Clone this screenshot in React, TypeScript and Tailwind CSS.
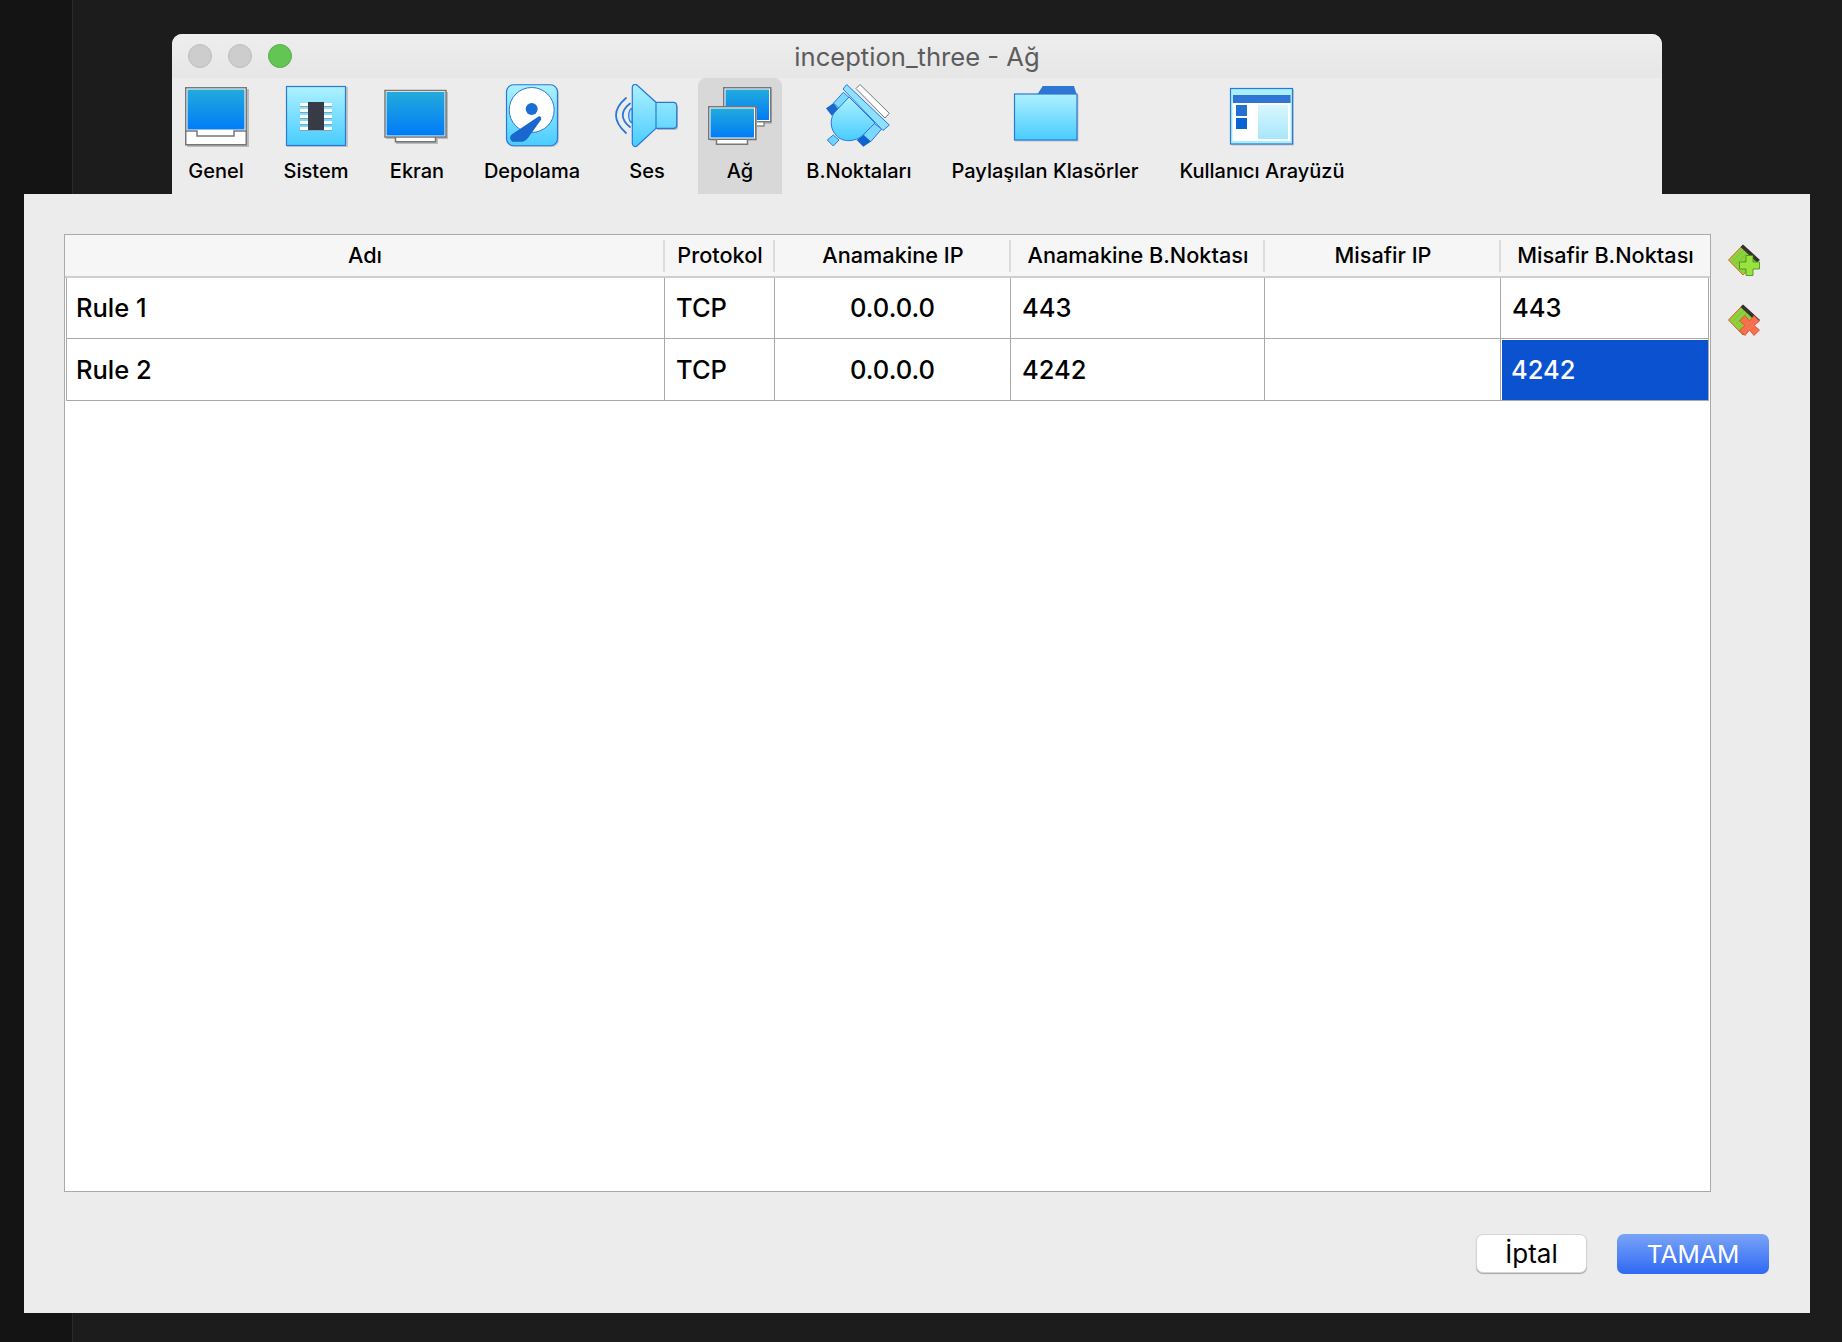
import React from 'react';

const BLUE = '#2a78d8';

// shared gradients for the toolbar icons
const Defs = () => (
  <svg width="0" height="0" className="block h-0 w-0">
    <defs>
      <linearGradient id="scr" x1="0" y1="0" x2="0" y2="1">
        <stop offset="0" stopColor="#22abdc" />
        <stop offset="1" stopColor="#007cf7" />
      </linearGradient>
      <linearGradient id="lite" x1="0" y1="0" x2="0" y2="1">
        <stop offset="0" stopColor="#aef1ff" />
        <stop offset="1" stopColor="#48ccff" />
      </linearGradient>
      <linearGradient id="pane" x1="0" y1="0" x2="0" y2="1">
        <stop offset="0" stopColor="#d8f7ff" />
        <stop offset="1" stopColor="#a8e6fa" />
      </linearGradient>
    </defs>
  </svg>
);

const Icon = ({ children }: { children: React.ReactNode }) => (
  <svg viewBox="0 0 70 66" width="70" height="66" className="block">
    {children}
  </svg>
);

const GenelIcon = () => (
  <Icon>
    <rect x="6" y="5" width="62" height="58" fill="#bbb" />
    <rect x="4.75" y="3.75" width="60.5" height="57" fill="#fff" stroke="#777" strokeWidth="1.5" />
    <rect x="6.5" y="5.5" width="57" height="40" fill="url(#scr)" />
    <path d="M5 47H16V52H53V47H65" fill="none" stroke="#777" strokeWidth="1.5" />
  </Icon>
);

const SistemIcon = () => (
  <Icon>
    <rect x="6" y="3" width="61" height="60" fill="#c4c4c4" />
    <rect x="5.5" y="2.5" width="59" height="59" fill="url(#lite)" stroke={BLUE} strokeWidth="1.2" />
    {[19, 25, 31, 37, 43].map((y) => (
      <g key={y}>
        <rect x="19" y={y} width="32" height="3" fill="#fff" />
        <rect x="19" y={y + 3} width="32" height="1" fill="#7ba7c4" />
      </g>
    ))}
    <rect x="27" y="18" width="16" height="28" fill="#383b45" />
  </Icon>
);

const EkranIcon = () => (
  <Icon>
    <rect x="14" y="50" width="42" height="10" fill="#bbb" />
    <rect x="4" y="8" width="62" height="47" fill="#bbb" />
    <path d="M13.5 53V57.75H53.5V53" fill="#fff" stroke="#777" strokeWidth="1.5" />
    <rect x="3" y="6.5" width="61" height="46.5" fill="#fff" stroke="#777" strokeWidth="1.5" />
    <rect x="4.5" y="8" width="58" height="43.5" fill="url(#scr)" />
  </Icon>
);

const DepolamaIcon = () => (
  <Icon>
    <rect x="10" y="2" width="52" height="61" rx="7" fill="#c8c8c8" />
    <rect x="9.5" y="0.75" width="51" height="61" rx="7" fill="url(#lite)" stroke={BLUE} strokeWidth="1.2" />
    <circle cx="34.7" cy="26" r="22.5" fill="#fff" stroke={BLUE} strokeWidth="1" />
    <circle cx="34.7" cy="25" r="6" fill="#1a6fd4" />
    <path d="M41.5 32.5C43.5 31.8 44.8 33.8 44 35.8L31 54C28.8 57 26.5 57.8 23.5 57.8H17C13.8 57.8 12 54 13.8 51.5C14.5 50.6 15.5 50 16.5 49.2Z" fill="#1a68cd" />
  </Icon>
);

const SesIcon = () => (
  <Icon>
    <path d="M14 14Q-6 31 14 49M18 19.5Q3.5 31 18 43" fill="none" stroke={BLUE} strokeWidth="1.8" strokeLinecap="round" />
    <path d="M20.3 24C15.5 26 15.5 37 20.3 39Z" fill="#9fe3ff" stroke={BLUE} strokeWidth="1.2" />
    <path d="M45 20H62.5C64.5 20 66 21.5 66 23.5V43C66 45 64.5 46 62.5 46H45Z" fill="#b5b5b5" />
    <path d="M20.3 3.5C20.3 0.5 23 -0.5 25.2 1.2L44 18.3H61.3C63.5 18.3 64.7 19.7 64.7 21.7V41C64.7 43 63.5 44.3 61.3 44.3H44L25.2 61.8C23 63.5 20.3 62 20.3 59.3Z" fill="url(#lite)" stroke={BLUE} strokeWidth="1.2" />
    <path d="M44 18.3V44.3" stroke={BLUE} strokeWidth="1.2" />
  </Icon>
);

const AgIcon = () => (
  <Icon>
    <rect x="20" y="5" width="47" height="35" fill="#bbb" />
    <rect x="50" y="36" width="9" height="6" fill="#fff" stroke="#777" strokeWidth="1.2" />
    <rect x="18.75" y="3.75" width="47" height="34" fill="#fff" stroke="#777" strokeWidth="1.5" />
    <rect x="20.5" y="5.5" width="43.5" height="30.5" fill="url(#scr)" />
    <rect x="5" y="24" width="47" height="33" fill="#bbb" />
    <path d="M11.5 53V60.25H42.5V53" fill="#fff" stroke="#777" strokeWidth="1.5" />
    <rect x="3.75" y="22.75" width="47" height="32.5" fill="#fff" stroke="#777" strokeWidth="1.5" />
    <rect x="5.5" y="24.5" width="43.5" height="29" fill="url(#scr)" />
  </Icon>
);

const NoktaIcon = () => (
  <Icon>
    <path d="M36 0.5L65.3 29.3L61 34L32 4.5Z" fill="#fff" stroke="#777" strokeWidth="1" />
    <path d="M9.3 19.3L19.3 8.3L25.3 13.7L15.3 24.3Z" fill="#7bd8ff" stroke={BLUE} strokeWidth="1" />
    <path d="M2 24.3L9.3 19.3L15.3 26L7.7 31.7Z" fill="#1a68cd" />
    <path d="M39.3 51L50 39.3L57.7 45L46.7 57.7Z" fill="#7bd8ff" stroke={BLUE} strokeWidth="1" />
    <path d="M32.7 56L39.3 51L46.7 57.7L39.3 62.7Z" fill="#0f62cf" />
    <path d="M3.3 56L9.3 51L15 56L9.3 62Z" fill="#6fd4ff" stroke={BLUE} strokeWidth="1" />
    <path d="M25 13L51 39L39 51C32 58 18 59 12 51C6 45 6 35 10 29Z" fill="url(#lite)" stroke={BLUE} strokeWidth="1" />
    <path d="M22.7 0.5L65.3 41L59 46.5L19 5Z" fill="#8fe2ff" stroke={BLUE} strokeWidth="1" />
  </Icon>
);

const FolderIcon = () => (
  <Icon>
    <rect x="5" y="11" width="63.5" height="46.5" fill="#c4c4c4" />
    <path d="M27.3 10.5L32.7 2H64L66.7 10.5Z" fill="#2f75d4" />
    <rect x="4.5" y="10" width="62.5" height="46" fill="url(#lite)" stroke={BLUE} strokeWidth="1.2" />
  </Icon>
);

const ArayuzIcon = () => (
  <Icon>
    <rect x="4.5" y="5.5" width="62.5" height="56" fill="#c4c4c4" />
    <rect x="3.5" y="4.5" width="62" height="55.5" fill="#a8efff" stroke={BLUE} strokeWidth="1.2" />
    <rect x="5.5" y="19" width="58" height="38" fill="#fff" />
    <rect x="6" y="11" width="57.5" height="8" fill="#2f75d4" />
    <rect x="9" y="21" width="11" height="11" fill="#2170d2" />
    <rect x="9" y="34" width="11" height="11" fill="#0a63d5" />
    <rect x="31" y="21" width="30" height="34" fill="url(#pane)" />
  </Icon>
);

const TABS = [
  { label: 'Genel', w: 'w-[88px]', icon: <GenelIcon /> },
  { label: 'Sistem', w: 'w-[112px]', icon: <SistemIcon /> },
  { label: 'Ekran', w: 'w-[90px]', icon: <EkranIcon /> },
  { label: 'Depolama', w: 'w-[140px]', icon: <DepolamaIcon /> },
  { label: 'Ses', w: 'w-[90px]', icon: <SesIcon /> },
  { label: 'Ağ', w: 'w-[84px] ml-[6px] bg-[#d8d8d8] rounded-t-lg', icon: <AgIcon /> },
  { label: 'B.Noktaları', w: 'w-[154px]', icon: <NoktaIcon /> },
  { label: 'Paylaşılan Klasörler', w: 'w-[218px]', icon: <FolderIcon /> },
  { label: 'Kullanıcı Arayüzü', w: 'w-[216px]', icon: <ArayuzIcon /> },
];

const COLS = [
  { title: 'Adı', head: 'w-[600px]', cell: 'w-[598px] pl-[9px]' },
  { title: 'Protokol', head: 'w-[110px]', cell: 'w-[110px] pl-[11px]' },
  { title: 'Anamakine IP', head: 'w-[236px]', cell: 'w-[236px] justify-center' },
  { title: 'Anamakine B.Noktası', head: 'w-[254px]', cell: 'w-[254px] pl-[11px]' },
  { title: 'Misafir IP', head: 'w-[236px]', cell: 'w-[236px] pl-[11px]' },
  { title: 'Misafir B.Noktası', head: 'w-[209px]', cell: 'w-[207px] pl-[11px]' },
];

const ROWS = [
  ['Rule 1', 'TCP', '0.0.0.0', '443', '', '443'],
  ['Rule 2', 'TCP', '0.0.0.0', '4242', '', '4242'],
];

const AddRuleIcon = ({ remove }: { remove?: boolean }) => (
  <svg viewBox="0 0 32 32" width="32" height="32" className="block">
    <path d="M0.5 16L15 1L31 16L15 31Z" fill="#8ed13e" stroke={remove ? '#d8502c' : '#d8642c'} strokeWidth="1" />
    <path d="M5 17L16 6M8 20L19 9M11 23L22 12" stroke="#7cc233" strokeWidth="1" />
    <path d="M15 0.5L32 16L29 18.5L12.5 3Z" fill="#333" />
    {remove ? (
      <path
        d="M21.5 17L26 11.5L31.5 17L26 21.5L31.5 26L26 31.5L21.5 26L17 31.5L11.5 26L17 21.5L11.5 17L17 11.5Z"
        fill="#f7704f"
        stroke="#dd4a25"
        strokeWidth="0.8"
      />
    ) : (
      <path
        d="M18 11.5H25V18H31.5V25H25V31.5H18V25H11.5V18H18Z"
        fill="#98e340"
        stroke="#3c8a10"
        strokeWidth="0.8"
      />
    )}
  </svg>
);

const App: React.FC = () => {
  return (
    <div className="w-[1842px] h-[1342px] overflow-hidden pt-[34px] font-['Inter',sans-serif] text-black bg-[linear-gradient(to_right,#141414_72px,#2a2a2a_72px,#2a2a2a_73px,#1c1c1c_73px)]">
      <Defs />

      {/* window behind the sheet */}
      <div className="ml-[172px] w-[1490px] h-[160px] bg-[#ececec] rounded-t-[10px] overflow-hidden">
        <div className="relative h-[44px] flex items-center gap-[16px] pl-[16px] bg-[linear-gradient(to_bottom,#eeeeee,#e6e6e6)]">
          <span className="w-[24px] h-[24px] rounded-full bg-[#cdcdcd] border border-[#bdbdbd]" />
          <span className="w-[24px] h-[24px] rounded-full bg-[#cdcdcd] border border-[#bdbdbd]" />
          <span className="w-[24px] h-[24px] rounded-full bg-[#62c554] border border-[#55b047]" />
          <span className="absolute left-0 right-0 top-[1px] h-[44px] leading-[44px] text-center text-[25.6px] text-[#5c5c5c]">
            inception_three - Ağ
          </span>
        </div>
        <div className="flex h-[116px]">
          {TABS.map((t) => (
            <div key={t.label} className={`${t.w} h-[116px] flex flex-col items-center pt-[6px]`}>
              {t.icon}
              <span className="mt-[9px] h-[24px] leading-[24px] text-[20px] font-medium whitespace-nowrap">{t.label}</span>
            </div>
          ))}
        </div>
      </div>

      {/* sheet */}
      <div className="ml-[24px] w-[1786px] h-[1119px] bg-[#ececec] pt-[40px] pl-[40px] pr-[41px]">
        <div className="flex gap-[17px]">
          <div className="w-[1647px] h-[958px] border border-[#aaaaaa] bg-white">
            <div className="flex h-[43px] bg-[#f6f6f6] border-b-2 border-[#cfcfcf]">
              {COLS.map((c, i) => (
                <div key={c.title} className={`${c.head} relative flex items-center`}>
                  <span className="flex-1 text-center text-[21.7px] font-medium whitespace-nowrap">{c.title}</span>
                  {i < COLS.length - 1 && <span className="absolute right-0 top-[5px] w-[2px] h-[32px] bg-[#dcdcdc]" />}
                </div>
              ))}
            </div>
            <div className="ml-px w-[1643px] border-l border-r border-[#aaaaaa]">
              {ROWS.map((row, r) => (
                <div key={row[0]} className={`flex border-b border-[#aaaaaa] ${r === 0 ? 'h-[61px]' : 'h-[62px]'}`}>
                  {row.map((v, i) => {
                    const selected = r === 1 && i === 5;
                    return (
                      <div
                        key={i}
                        className={`${COLS[i].cell} flex items-center ${r === 0 ? '' : 'pt-[2px]'} text-[25.5px] font-[450] ${
                          i < 5 ? 'border-r border-[#aaaaaa]' : ''
                        } ${selected ? 'bg-[#0a52d0] text-white border-t border-l border-white !pl-[9px] !pt-[1px]' : ''}`}
                      >
                        {v}
                      </div>
                    );
                  })}
                </div>
              ))}
            </div>
          </div>
          <div className="flex flex-col gap-[28px] pt-[10px]">
            <AddRuleIcon />
            <AddRuleIcon remove />
          </div>
        </div>

        <div className="flex justify-end items-start gap-[30px] mt-[42px]">
          <button className="w-[111px] h-[39px] rounded-[7px] bg-white border border-[#d4d4d4] shadow-[0_1px_1px_rgba(0,0,0,0.3)] text-[26px] leading-[37px]">
            İptal
          </button>
          <button className="w-[152px] h-[40px] rounded-[7px] bg-[linear-gradient(to_bottom,#7aa4f6,#2e68f5)] text-white text-[24.7px] leading-[40px]">
            TAMAM
          </button>
        </div>
      </div>
    </div>
  );
};

export default App;
